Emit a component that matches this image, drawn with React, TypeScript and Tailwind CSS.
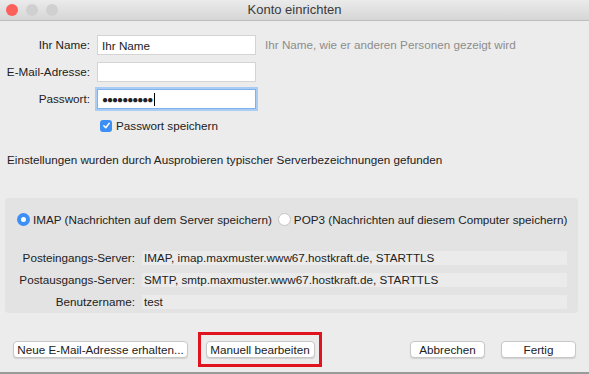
import { useState } from 'react'

const FONT = { fontFamily: '"Liberation Sans", Arial, sans-serif' }

function Light({ color }: { color: string }) {
  return <span className={`w-3 h-3 rounded-full ${color}`} />
}

function Field({ label, children }: { label: string; children: React.ReactNode }) {
  return (
    <div className="flex items-center h-[20px] shrink-0">
      <div className="w-[90px] text-right text-[11.7px] text-[#222]">{label}</div>
      <div className="ml-[7px] flex items-center">{children}</div>
    </div>
  )
}

function Radio({ checked, label }: { checked?: boolean; label: string }) {
  return (
    <div className="flex items-center gap-[3px] whitespace-nowrap">
      {checked ? (
        <span className="w-[13px] h-[13px] rounded-full bg-[#3b8ff5] flex items-center justify-center">
          <span className="w-[5px] h-[5px] rounded-full bg-white" />
        </span>
      ) : (
        <span className="w-[13px] h-[13px] rounded-full bg-white border border-[#c4c4c4]" />
      )}
      <span className="text-[11.7px] text-[#222]">{label}</span>
    </div>
  )
}

function InfoRow({ label, value }: { label: string; value: string }) {
  return (
    <div className="flex items-center h-[14px] whitespace-nowrap">
      <div className="w-[130px] text-right text-[11.7px] text-[#222]">{label}</div>
      <div className="ml-[7px] w-[425px] h-[14px] bg-[#ebebeb] flex items-center px-[2px] text-[11.7px] text-[#222]">
        {value}
      </div>
    </div>
  )
}

function Btn({ children, w }: { children: React.ReactNode; w: string }) {
  return (
    <button
      className={`${w} h-[17px] bg-white rounded-[4px] border border-[#c8c8c8] shadow-[0_1px_1px_rgba(0,0,0,0.12)] text-[11.7px] text-[#222] flex items-center justify-center whitespace-nowrap`}
    >
      {children}
    </button>
  )
}

export default function App() {
  const [name, setName] = useState('Ihr Name')
  const [mail, setMail] = useState('')

  return (
    <div className="w-[589px] h-[374px] bg-[#ececec] flex flex-col overflow-hidden" style={FONT}>
      {/* title bar */}
      <div className="h-[21px] shrink-0 flex items-center relative bg-gradient-to-b from-[#ebebeb] to-[#d6d6d6] border-b border-[#bdbdbd]">
        <div className="flex items-center gap-[8px] pl-[6px]">
          <Light color="bg-[#fc605c]" />
          <Light color="bg-[#d0d0d0]" />
          <Light color="bg-[#d0d0d0]" />
        </div>
        <div className="absolute inset-0 flex items-center justify-center text-[13px] text-[#3a3a3a]">
          Konto einrichten
        </div>
      </div>

      {/* account fields */}
      <div className="flex flex-col gap-[7px] pt-[14px] shrink-0">
        <Field label="Ihr Name:">
          <input
            value={name}
            onChange={e => setName(e.target.value)}
            className="w-[159px] h-[20px] bg-white border border-[#d4d4d4] px-[4px] text-[11.7px] text-[#222] outline-none"
          />
          <span className="ml-[9px] text-[11.7px] text-[#8d8d8d] whitespace-nowrap">Ihr Name, wie er anderen Personen gezeigt wird</span>
        </Field>
        <Field label="E-Mail-Adresse:">
          <input
            value={mail}
            onChange={e => setMail(e.target.value)}
            className="w-[159px] h-[20px] bg-white border border-[#d4d4d4] px-[4px] text-[11.7px] outline-none"
          />
        </Field>
        <Field label="Passwort:">
          <div className="w-[159px] h-[20px] bg-white border border-[#7fb1ec] shadow-[0_0_0_2px_#a9cdf5] flex items-center px-[4px] text-[11.7px] text-[#222]">
            <span className="tracking-[-1px] text-[10px]">●●●●●●●●●●</span>
            <span className="ml-[2px] w-px h-[13px] bg-black" />
          </div>
        </Field>
        <div className="flex items-center pl-[100px] pt-[1px] gap-[4px]">
          <span className="w-[12px] h-[12px] rounded-[3px] bg-[#3b8ff5] flex items-center justify-center">
            <svg width="9" height="9" viewBox="0 0 10 10">
              <path d="M2 5.2 L4.2 7.5 L8 2.5" fill="none" stroke="white" strokeWidth="1.6" strokeLinecap="round" strokeLinejoin="round" />
            </svg>
          </span>
          <span className="text-[11.7px] text-[#222]">Passwort speichern</span>
        </div>
      </div>

      <div className="mt-[16px] pl-[7px] text-[11.7px] text-[#222] shrink-0 whitespace-nowrap">
        Einstellungen wurden durch Ausprobieren typischer Serverbezeichnungen gefunden
      </div>

      {/* server settings */}
      <div className="mt-[30px] mx-[5px] w-[573px] h-[115px] shrink-0 bg-[#e3e3e3] rounded-[4px] flex flex-col pt-[13px]">
        <div className="flex items-center gap-[6px] pl-[12px]">
          <Radio checked label="IMAP (Nachrichten auf dem Server speichern)" />
          <Radio label="POP3 (Nachrichten auf diesem Computer speichern)" />
        </div>
        <div className="flex flex-col gap-[8px] mt-[22px]">
          <InfoRow label="Posteingangs-Server:" value="IMAP, imap.maxmuster.www67.hostkraft.de, STARTTLS" />
          <InfoRow label="Postausgangs-Server:" value="SMTP, smtp.maxmuster.www67.hostkraft.de, STARTTLS" />
          <InfoRow label="Benutzername:" value="test" />
        </div>
      </div>

      {/* buttons */}
      <div className="flex items-center mt-[19px] pl-[13px] pr-[13px] shrink-0">
        <Btn w="w-[175px]">Neue E-Mail-Adresse erhalten...</Btn>
        <div className="ml-[10px] w-[124px] h-[35px] border-[3px] border-[#e0141e] flex items-center justify-center">
          <Btn w="w-[109px]">Manuell bearbeiten</Btn>
        </div>
        <div className="ml-auto flex gap-[16px]">
          <Btn w="w-[75px]">Abbrechen</Btn>
          <Btn w="w-[75px]">Fertig</Btn>
        </div>
      </div>
      <div className="mt-auto h-[2px] bg-[#9a9a9a] shrink-0" />
    </div>
  )
}
